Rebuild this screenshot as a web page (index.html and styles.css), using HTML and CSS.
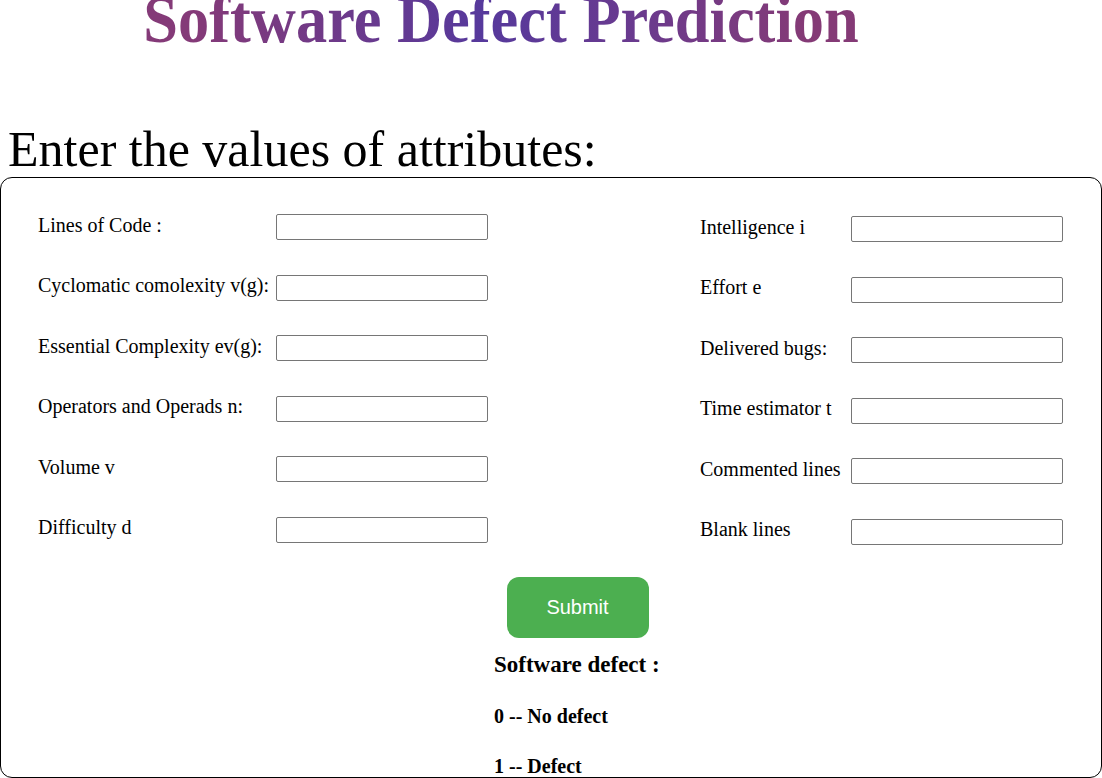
FILE: index.html
```html
<!DOCTYPE html>
<html>
<head>
<meta charset="utf-8">
<link rel="stylesheet" href="styles.css">
</head>
<body>
<h1 class="title">Software Defect Prediction</h1>
<h2 class="subtitle">Enter the values of attributes:</h2>
<div class="panel">
  <div class="columns">
    <div class="col col-left">
      <div class="row"><span class="lbl">Lines of Code :</span><input class="field" type="text"></div>
      <div class="row"><span class="lbl">Cyclomatic comolexity v(g):</span><input class="field" type="text"></div>
      <div class="row"><span class="lbl">Essential Complexity ev(g):</span><input class="field" type="text"></div>
      <div class="row"><span class="lbl">Operators and Operads n:</span><input class="field" type="text"></div>
      <div class="row"><span class="lbl">Volume v</span><input class="field" type="text"></div>
      <div class="row"><span class="lbl">Difficulty d</span><input class="field" type="text"></div>
    </div>
    <div class="col col-right">
      <div class="row"><span class="lbl">Intelligence i</span><input class="field" type="text"></div>
      <div class="row"><span class="lbl">Effort e</span><input class="field" type="text"></div>
      <div class="row"><span class="lbl">Delivered bugs:</span><input class="field" type="text"></div>
      <div class="row"><span class="lbl">Time estimator t</span><input class="field" type="text"></div>
      <div class="row"><span class="lbl">Commented lines</span><input class="field" type="text"></div>
      <div class="row"><span class="lbl">Blank lines</span><input class="field" type="text"></div>
    </div>
  </div>
  <div class="actions">
    <button class="submit" type="button">Submit</button>
  </div>
  <div class="legend">
    <div class="legend-title">Software defect :</div>
    <div class="legend-item">0 -- No defect</div>
    <div class="legend-item">1 -- Defect</div>
  </div>
</div>
</body>
</html>
```
FILE: styles.css
```css
html, body {
  margin: 0;
  padding: 0;
  background: #fff;
  overflow: hidden;
}
body {
  font-family: "Liberation Serif", "Times New Roman", serif;
  color: #000;
  height: 778px;
}
.title {
  margin: -14px 100px 0 0;
  text-align: center;
  font-size: 68px;
  font-weight: bold;
  line-height: 66px;
  transform: scaleX(0.918);
  transform-origin: 50% 0;
  background: linear-gradient(90deg, #843a78 17%, #56399c 48%, #6a3a8e 65%, #843a76 83%);
  -webkit-background-clip: text;
  background-clip: text;
  color: transparent;
}
.subtitle {
  margin: 70px 0 0 8px;
  font-size: 50px;
  font-weight: normal;
  line-height: 55px;
}
.panel {
  border: 1px solid #000;
  border-radius: 12px;
  height: 601px;
  box-sizing: border-box;
  margin-top: 0;
  padding: 36px 38px 0 37px;
  overflow: hidden;
}
.columns {
  display: flex;
  justify-content: space-between;
}
.col {
  display: flex;
  flex-direction: column;
  gap: 34.5px;
}
.col-right {
  margin-top: 2px;
}
.row {
  display: flex;
  align-items: center;
  height: 26px;
}
.lbl {
  font-size: 20px;
  margin-top: -4px;
  white-space: nowrap;
}
.col-left .lbl { width: 238px; }
.col-right .lbl { width: 151px; }
.field {
  width: 212px;
  height: 26px;
  box-sizing: border-box;
  border: 1px solid #767676;
  border-radius: 2px;
  padding: 0;
  margin: 0;
  background: #fff;
}
.actions {
  display: flex;
  justify-content: center;
  margin-top: 32px;
  padding-left: 54px;
}
.submit {
  width: 142px;
  height: 61px;
  background: #4caf50;
  color: #fff;
  border: none;
  border-radius: 12px;
  font-family: "Liberation Sans", Arial, sans-serif;
  font-size: 20px;
}
.legend {
  margin-left: 456px;
  font-weight: bold;
}
.legend-title {
  font-size: 23px;
  line-height: 26px;
  margin-top: 14px;
}
.legend-item {
  font-size: 20px;
  line-height: 23px;
  margin-top: 27px;
}
.legend-item + .legend-item {
  margin-top: 27px;
}
```
